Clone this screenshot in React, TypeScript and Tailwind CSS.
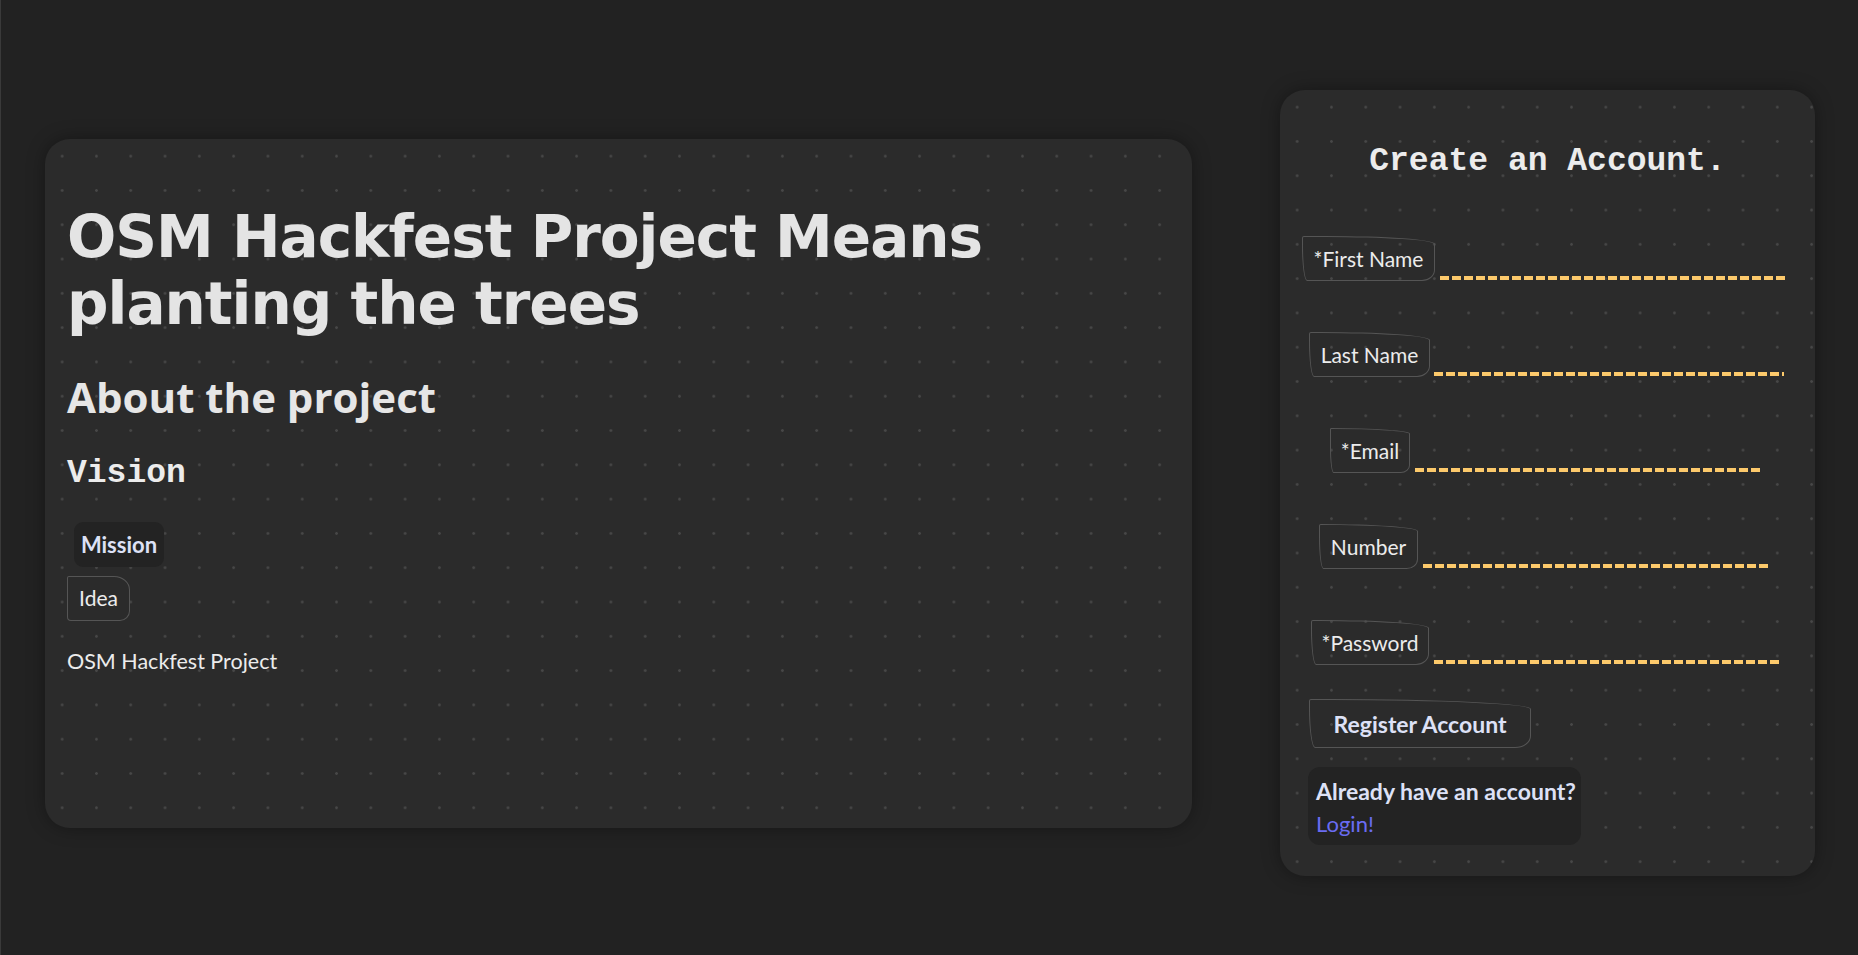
import React from 'react';

const FIELDS = [
  { label: '*First Name', type: 'text', ml: 'ml-[22px]', box: 'w-[133px]', gap: 'ml-[5px]', line: 'w-[348px]' },
  { label: 'Last Name', type: 'text', ml: 'ml-[29px]', box: 'w-[121px]', gap: 'ml-[4px]', line: 'w-[350px]' },
  { label: '*Email', type: 'email', ml: 'ml-[50px]', box: 'w-[80px]', gap: 'ml-[5px]', line: 'w-[346px]' },
  { label: 'Number', type: 'tel', ml: 'ml-[39px]', box: 'w-[99px]', gap: 'ml-[5px]', line: 'w-[348px]' },
  { label: '*Password', type: 'password', ml: 'ml-[31px]', box: 'w-[118px]', gap: 'ml-[5px]', line: 'w-[346px]' },
];

// dotted paper background shared by both cards
const CARD =
  'rounded-[25px] bg-[#2b2b2b] shadow-[0_0_18px_rgba(0,0,0,0.35)] bg-[radial-gradient(circle,#474747_1.1px,transparent_1.6px)] bg-[length:34.3px_34.3px]';

export default function App() {
  return (
    <div className="flex h-screen w-full items-center justify-between border-l border-[#3a3a3a] bg-[#222222] pl-[44px] pr-[43px] pt-[11px] font-['Lato',sans-serif]">
      {/* ── About card ── */}
      <section className={`${CARD} flex h-[689px] w-[1147px] flex-col items-start px-[22px] pt-[65px]`}>
        <h1 className="font-['DejaVu_Sans',sans-serif] text-[58px] leading-[67.5px] font-bold tracking-[-1px] text-[#e4e4e4]">
          OSM Hackfest Project Means planting the trees
        </h1>
        <h2 className="mt-[33px] font-['Open_Sans',sans-serif] text-[42px] leading-[50px] font-bold text-[#e6e6e6]">
          About the project
        </h2>
        <h3 className="mt-[33px] font-['Liberation_Mono',monospace] text-[33px] leading-[37px] font-bold text-[#ececec]">
          Vision
        </h3>
        <button className="mt-[30px] ml-[7px] h-[45px] w-[90px] rounded-[9px] bg-[#232323] text-center text-[22px] font-bold text-[#dde1f6]">
          Mission
        </button>
        <button className="mt-[9px] h-[45px] w-[63px] rounded-[2px_16px_10px_4px/2px_14px_10px_4px] border border-[#555555] text-center text-[21px] text-[#ececec]">
          Idea
        </button>
        <p className="mt-[27px] text-[21.5px] leading-[26px] text-[#ececec]">OSM Hackfest Project</p>
      </section>

      {/* ── Register card ── */}
      <section className={`${CARD} flex h-[786px] w-[535px] flex-col items-start pt-[53px]`}>
        <h2 className="w-full text-center font-['Liberation_Mono',monospace] text-[33px] leading-[37px] font-bold text-[#ececec]">
          Create an Account.
        </h2>

        <form className="mt-[56px] flex flex-col gap-[51px]">
          {FIELDS.map((f) => (
            <div key={f.label} className={`flex items-end ${f.ml}`}>
              <label
                className={`flex h-[45px] shrink-0 items-center justify-center rounded-[2px_110px_13px_5px/2px_8px_11px_36px] border border-[#555555] text-[21px] text-[#ececec] ${f.box}`}
              >
                {f.label}
              </label>
              <input
                type={f.type}
                className={`mb-[1px] h-[30px] bg-transparent bg-[repeating-linear-gradient(90deg,#fcc96b_0_9px,transparent_9px_12px)] bg-[length:100%_4px] bg-bottom bg-no-repeat text-[#ececec] outline-none ${f.gap} ${f.line}`}
              />
            </div>
          ))}
        </form>

        <button className="mt-[34px] ml-[29px] h-[49px] w-[222px] rounded-[2px_200px_16px_6px/2px_10px_12px_40px] border border-[#555555] pt-[1px] text-center text-[23px] font-bold text-[#dde1f6]">
          Register Account
        </button>

        <div className="mt-[19px] ml-[28px] flex h-[78px] w-[273px] flex-col rounded-[12px] bg-[#232323] px-[8px] pt-[10px]">
          <span className="whitespace-nowrap text-[23px] leading-[28px] font-bold text-[#dde1f6]">
            Already have an account?
          </span>
          <a href="#" className="mt-[5px] text-[22px] leading-[27px] text-[#6a6cf2]">
            Login!
          </a>
        </div>
      </section>
    </div>
  );
}
